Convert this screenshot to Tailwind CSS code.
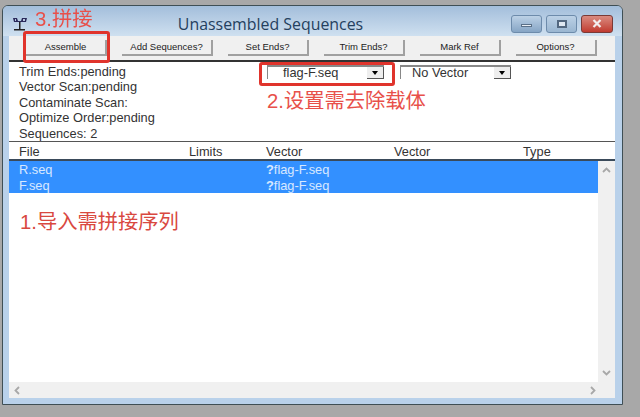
<!DOCTYPE html>
<html lang="zh">
<head>
	<meta charset="UTF-8" />
	<title>Unassembled Sequences</title>
	<script src="https://cdn.jsdelivr.net/npm/@tailwindcss/browser@4"></script>
</head>
<body class="bg-[#a8a8a8] w-[640px] h-[417px] overflow-hidden font-['Liberation_Sans',sans-serif]">
	<div class="relative w-[640px] h-[417px] pt-[5px] pl-[2px] blur-[0.5px]">
		<!-- window frame -->
		<div class="w-[621px] h-[400px] flex flex-col rounded-t-md border border-[#3f4f55] bg-[#b9d1ea] overflow-hidden">
			<!-- title bar -->
			<div class="h-[30px] shrink-0 flex items-center pl-[9px] pr-[8px] bg-gradient-to-b from-[#a3bedb] to-[#cfe0f0]">
				<svg class="w-[16px] h-[16px] mt-[5px]" viewBox="0 0 16 16">
					<path d="M1 2h4l1 3h3l1-3h5l-1 4H2z" fill="#2a2a5a" />
					<path d="M3 3h1v2H3zM11 3h2v2h-2z" fill="#b9c4e0" />
					<path d="M7 6h1.500v7H7zM2 13h11v1.500H2z" fill="#222" />
				</svg>
				<div class="flex-1 text-center font-['Open_Sans',sans-serif] text-[15.900px] text-[#24405e] pl-[2px] mt-[7px]">Unassembled Sequences</div>
				<div class="flex gap-[4px] mt-[5px] mr-[1px]">
					<div class="w-[31px] h-[18px] rounded-[3px] border border-[#6d8bab] bg-gradient-to-b from-[#bcd1e6] to-[#86a5c5] flex items-center justify-center">
						<div class="w-[11px] h-[3px] mt-[4px] bg-[#e8eef5] border border-[#5a7088]"></div>
					</div>
					<div class="w-[31px] h-[18px] rounded-[3px] border border-[#6d8bab] bg-gradient-to-b from-[#bcd1e6] to-[#9ab6d1] flex items-center justify-center">
						<div class="w-[10px] h-[8px] border-2 border-[#52677f] bg-[#dfe8f2]"></div>
					</div>
					<div class="w-[32px] h-[18px] rounded-[3px] border border-[#7a3a36] bg-gradient-to-b from-[#d98a80] to-[#c0392f] flex items-center justify-center">
						<svg class="w-[10px] h-[9px]" viewBox="0 0 10 9"><path d="M1.500 1l7 7M8.500 1l-7 7" stroke="#f3eeee" stroke-width="2.200" /></svg>
					</div>
				</div>
			</div>
			<!-- client area -->
			<div class="mx-[6px] w-[606px] h-[362px] shrink-0 flex flex-col bg-white">
				<!-- toolbar -->
				<div class="h-[26px] shrink-0 flex gap-[15px] pl-[17px] pt-[4px] bg-[#f0f0f0] border-b-2 border-[#333] text-[9.500px] text-[#222]">
					<div class="w-[81px] h-[16px] border-r-2 border-b-2 border-[#a0a0a0] text-center leading-[14px]">Assemble</div>
					<div class="w-[91px] h-[16px] border-r-2 border-b-2 border-[#a0a0a0] text-center leading-[14px]">Add Sequences?</div>
					<div class="w-[81px] h-[16px] border-r-2 border-b-2 border-[#a0a0a0] text-center leading-[14px]">Set Ends?</div>
					<div class="w-[81px] h-[16px] border-r-2 border-b-2 border-[#a0a0a0] text-center leading-[14px]">Trim Ends?</div>
					<div class="w-[81px] h-[16px] border-r-2 border-b-2 border-[#a0a0a0] text-center leading-[14px]">Mark Ref</div>
					<div class="w-[81px] h-[16px] border-r-2 border-b-2 border-[#a0a0a0] text-center leading-[14px]">Options?</div>
				</div>
				<!-- status and vector pickers -->
				<div class="h-[80px] shrink-0 flex pl-[10px] border-b border-[#555] text-[12.800px] text-[#333]">
					<div class="w-[248px] leading-[15.400px] pt-[2px]">
						<div>Trim Ends:pending</div>
						<div>Vector Scan:pending</div>
						<div>Contaminate Scan:</div>
						<div>Optimize Order:pending</div>
						<div>Sequences: 2</div>
					</div>
					<div class="flex gap-[16px] pt-[3px] items-start">
						<div class="w-[117px] h-[14px] flex items-center justify-between border-t-2 border-l border-[#888] pl-[15px]">
							<span>flag-F.seq</span>
							<span class="w-[17px] h-[12px] bg-[#eee] border-r border-b border-[#555] flex items-center justify-center"><span class="border-x-[3px] border-t-[4px] border-x-transparent border-t-black"></span></span>
						</div>
						<div class="w-[111px] h-[14px] flex items-center justify-between border-t-2 border-l border-[#888] pl-[11px]">
							<span>No Vector</span>
							<span class="w-[17px] h-[12px] bg-[#eee] border-r border-b border-[#555] flex items-center justify-center"><span class="border-x-[3px] border-t-[4px] border-x-transparent border-t-black"></span></span>
						</div>
					</div>
				</div>
				<!-- list header -->
				<div class="h-[19px] shrink-0 grid grid-cols-[170px_77px_128px_129px_1fr] pl-[10px] pb-[2px] items-center text-[12.800px] text-[#333] border-b-2 border-[#3a4a5a]">
					<span>File</span><span>Limits</span><span>Vector</span><span>Vector</span><span>Type</span>
				</div>
				<!-- list with scrollbars -->
				<div class="flex-1 flex min-h-0">
					<div class="flex-1 bg-white">
						<div class="h-[32px] bg-[#3390ff] text-white/80 text-[12.800px] leading-[16px] pt-[1px]">
							<div class="grid grid-cols-[247px_1fr] pl-[10px]"><span>R.seq</span><span><b>?</b>flag-F.seq</span></div>
							<div class="grid grid-cols-[247px_1fr] pl-[10px]"><span>F.seq</span><span><b>?</b>flag-F.seq</span></div>
						</div>
					</div>
					<div class="w-[17px] bg-[#f0f0f0] flex flex-col items-center justify-between py-[6px] text-[#a8a8a8]">
						<svg class="w-[9px] h-[6px]" viewBox="0 0 9 6"><path d="M1 5l3.500-3.500L8 5" fill="none" stroke="currentColor" stroke-width="1.800" /></svg>
						<svg class="w-[9px] h-[6px]" viewBox="0 0 9 6"><path d="M1 1l3.500 3.500L8 1" fill="none" stroke="currentColor" stroke-width="1.800" /></svg>
					</div>
				</div>
				<div class="h-[16px] shrink-0 bg-[#f0f0f0] flex items-center justify-between pl-[5px] pr-[19px] text-[#a8a8a8]">
					<svg class="w-[6px] h-[9px]" viewBox="0 0 6 9"><path d="M5 1L1.500 4.500 5 8" fill="none" stroke="currentColor" stroke-width="1.800" /></svg>
					<svg class="w-[6px] h-[9px]" viewBox="0 0 6 9"><path d="M1 1l3.500 3.500L1 8" fill="none" stroke="currentColor" stroke-width="1.800" /></svg>
				</div>
			</div>
		</div>

		<!-- red annotations laid over the screenshot -->
		<div class="absolute left-[35px] top-[6px] text-[20.300px] leading-[26px] text-[#e8504a] font-['Liberation_Sans','Noto_Sans_CJK_SC',sans-serif]">3.拼接</div>
		<div class="absolute left-[23px] top-[31px] w-[87px] h-[32px] rounded-[3px] border-[3px] border-[#e0342c]"></div>
		<div class="absolute left-[259px] top-[62px] w-[136px] h-[24px] rounded-[3px] border-[3px] border-[#e0342c]"></div>
		<div class="absolute left-[267px] top-[88px] text-[20.300px] leading-[26px] text-[#e8504a] font-['Liberation_Sans','Noto_Sans_CJK_SC',sans-serif]">2.设置需去除载体</div>
		<div class="absolute left-[20px] top-[209px] text-[20.300px] leading-[26px] text-[#d9483f] font-['Liberation_Sans','Noto_Sans_CJK_SC',sans-serif]">1.导入需拼接序列</div>
	</div>
</body>
</html>
